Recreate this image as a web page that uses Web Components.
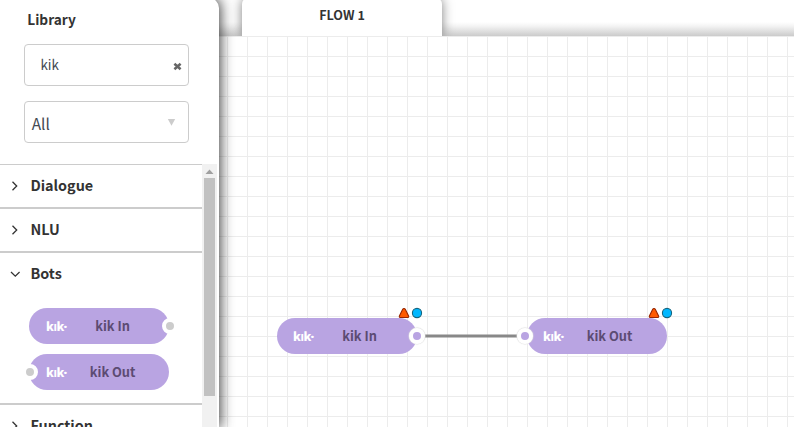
<!DOCTYPE html>
<html lang="en"><head><meta charset="utf-8"><title>Flow editor</title>
<style>
html,body{margin:0;height:100%;overflow:hidden;background:#fff}
body{font-family:"Noto Sans CJK SC","Noto Sans CJK JP","Source Sans Pro",sans-serif;color:#333}
</style></head><body>
<flow-app></flow-app>
<script>
const define=(name,html,setup)=>{
  const t=document.createElement('template');t.innerHTML=html;
  customElements.define(name,class extends HTMLElement{
    constructor(){super();this.attachShadow({mode:'open'}).append(t.content.cloneNode(true));}
    connectedCallback(){if(setup)setup(this,this.shadowRoot);}
  });
};

define('bot-node',`<style>
:host{display:block;position:relative;width:140px;height:36px;--port:#ccc}
.pill{display:flex;align-items:center;height:36px;border-radius:18px;background:#b9a4e2;overflow:hidden}
.logo{width:28.6px;padding-left:17px;color:#fff;font:900 12.4px/35px "Noto Sans CJK SC",sans-serif;letter-spacing:-.35px;white-space:nowrap}
:host([live]) .logo{width:29px;padding-left:16px}
.logo i{font:900 13px/1 "Open Sans",sans-serif;margin-left:-.7px}
.label{width:76px;text-align:center;font-weight:700;font-size:12.8px;line-height:34px;color:#5c4b73;white-space:nowrap}
:host([live]) .label{width:75px}
.port{position:absolute;top:10px;width:16px;height:16px;box-sizing:border-box;border-radius:50%;border:4.5px solid #fff;background:var(--port)}
:host([port=out]) .port{right:-8.5px}
:host([port=in]) .port{left:-7.5px}
:host([live]){--port:#b9a4e2}
:host([live]) .port{border-width:4px}
:host([live][port=out]) .port{right:-8px}
:host([live][port=in]) .port{left:-10px}
:host([live]) .port{box-shadow:0 0 1px .5px #ddd}
.marks{display:none;position:absolute;left:121px;top:-11px}
:host([live]) .marks{display:block}
</style>
<div class="pill"><span class="logo">kık<i>·</i></span><span class="label"><slot></slot></span></div>
<span class="port"></span>
<svg class="marks" width="25" height="12" viewBox="0 0 25 12"><path d="M6 1.5Q6.9 1.5 7.4 2.5L10.6 9Q11 10.5 9.9 10.5H2.1Q1 10.5 1.4 9L4.6 2.5Q5.1 1.5 6 1.5Z" fill="#ff5a00" stroke="#982600" stroke-width="1.1"/><circle cx="19" cy="6" r="4.6" fill="#00b7ff" stroke="#16657f" stroke-width="1.1"/></svg>`);

define('library-section',`<style>
:host{display:block;border-bottom:2px solid #ccc}
.head{display:flex;align-items:center;height:42px}
svg{width:10px;height:10px;margin:0 10.4px 0 10px;flex:none}
b{font-size:14.4px;line-height:40px;height:42px}
:host([open]) .body{display:flex;flex-direction:column;gap:10px;padding:13px 0 13px 29px}
path{fill:none;stroke:#333;stroke-width:1.3}
.d{display:none}:host([open]) .d{display:block}:host([open]) .r{display:none}
</style><div class="head"><svg viewBox="0 0 10 10"><path class="r" d="M2.5 .8L6.7 5L2.5 9.2"/><path class="d" d="M1 3L5.3 7.2L9.6 3"/></svg><b></b></div><div class="body"><slot></slot></div>`,
(el,r)=>{r.querySelector('b').textContent=el.getAttribute('heading');});

define('library-field',`<style>
:host{display:flex;align-items:center;justify-content:space-between;box-sizing:border-box;width:165px;height:42px;border:1px solid #ccc;border-radius:4px;color:#444a52}
.v{padding-left:15.4px;font-size:13.4px;line-height:38px;height:40px}
:host([kind=select]) .v{padding:2px 0 0 6.7px;font-size:15.4px;line-height:39px;height:38px}
svg{width:9px;height:9px;margin:3px 6px 0 0}
:host([kind=select]) svg{margin:0 12.5px 0 0}
.s{display:none}:host([kind=select]) .s{display:block}:host([kind=select]) .x{display:none}
</style><span class="v"><slot></slot></span><svg viewBox="0 0 9 9"><path class="x" d="M1.4 1.7L7.6 7.3M7.6 1.7L1.4 7.3" stroke="#666" stroke-width="2.5"/><path class="s" d="M.8 1H8.2L4.5 7.8Z" fill="#ccc"/></svg>`);

define('side-scrollbar',`<style>
:host{display:flex;flex-direction:column;align-items:center;width:15px;background:#f1f1f1}
svg{width:15px;height:14px;flex:none}.thumb{width:11px;height:218px;background:#c1c1c1}
</style><svg viewBox="0 0 15 14"><path d="M3.5 10L7.5 5.5L11.5 10Z" fill="#a0a0a0"/></svg><div class="thumb"></div>`);

define('library-panel',`<style>
:host{display:flex;flex-direction:column;width:219px;height:429px;margin-top:-2px;background:#fff;border-radius:0 10px 0 0;box-shadow:0 0 14px 1px rgba(0,0,0,.8);position:relative;z-index:2}
h2{margin:9px 0 13px 27.3px;font-size:13.7px;line-height:24px;height:24px;font-weight:700}
.fields{display:grid;gap:15px;padding-left:24px}
.list{display:grid;grid-template-columns:202px 15px;flex:1;min-height:0;margin-top:21px;overflow:hidden}
.items{border-top:1px solid #ccc;height:263px;overflow:hidden;box-sizing:border-box}
</style>
<h2>Library</h2>
<div class="fields"><library-field>kik</library-field><library-field kind="select">All</library-field></div>
<div class="list"><div class="items">
<library-section heading="Dialogue"></library-section>
<library-section heading="NLU"></library-section>
<library-section heading="Bots" open><bot-node port="out">kik In</bot-node><bot-node port="in">kik Out</bot-node></library-section>
<library-section heading="Function"></library-section>
</div><side-scrollbar></side-scrollbar></div>`);

define('flow-tabs',`<style>
:host{display:flex;height:36px;padding-left:23px;overflow:hidden;background:linear-gradient(#fff 22px,#f4f4f4 26px,#cbcbcb 36px)}
.tab{width:200px;height:38px;margin-top:-2px;border-radius:6px 6px 0 0;background:#fff;box-shadow:0 0 12px rgba(0,0,0,.5);text-align:center;font-weight:700;font-size:12.6px;line-height:33px}
</style><div class="tab"><slot></slot></div>`);

define('flow-canvas',`<style>
:host{display:block;position:relative;flex:1;background:linear-gradient(90deg,#ececec 1px,transparent 1px) 8px 0/20px 20px,linear-gradient(#ececec 1px,transparent 1px) 0 0/20px 20px,#fff}
svg{position:absolute;left:198px;top:298px}
::slotted(bot-node){position:absolute!important;top:282px}
::slotted([port=out]){left:58px}
::slotted([port=in]){left:308px}
</style><svg width="110" height="4"><path d="M0 2H110" stroke="#888" stroke-width="3"/></svg><slot></slot>`);

define('flow-app',`<style>
:host{display:flex;height:427px;width:794px;overflow:hidden}
main{display:flex;flex-direction:column;width:575px}
</style><library-panel></library-panel><main><flow-tabs>FLOW 1</flow-tabs><flow-canvas><bot-node live port="out">kik In</bot-node><bot-node live port="in">kik Out</bot-node></flow-canvas></main>`);
</script></body></html>
